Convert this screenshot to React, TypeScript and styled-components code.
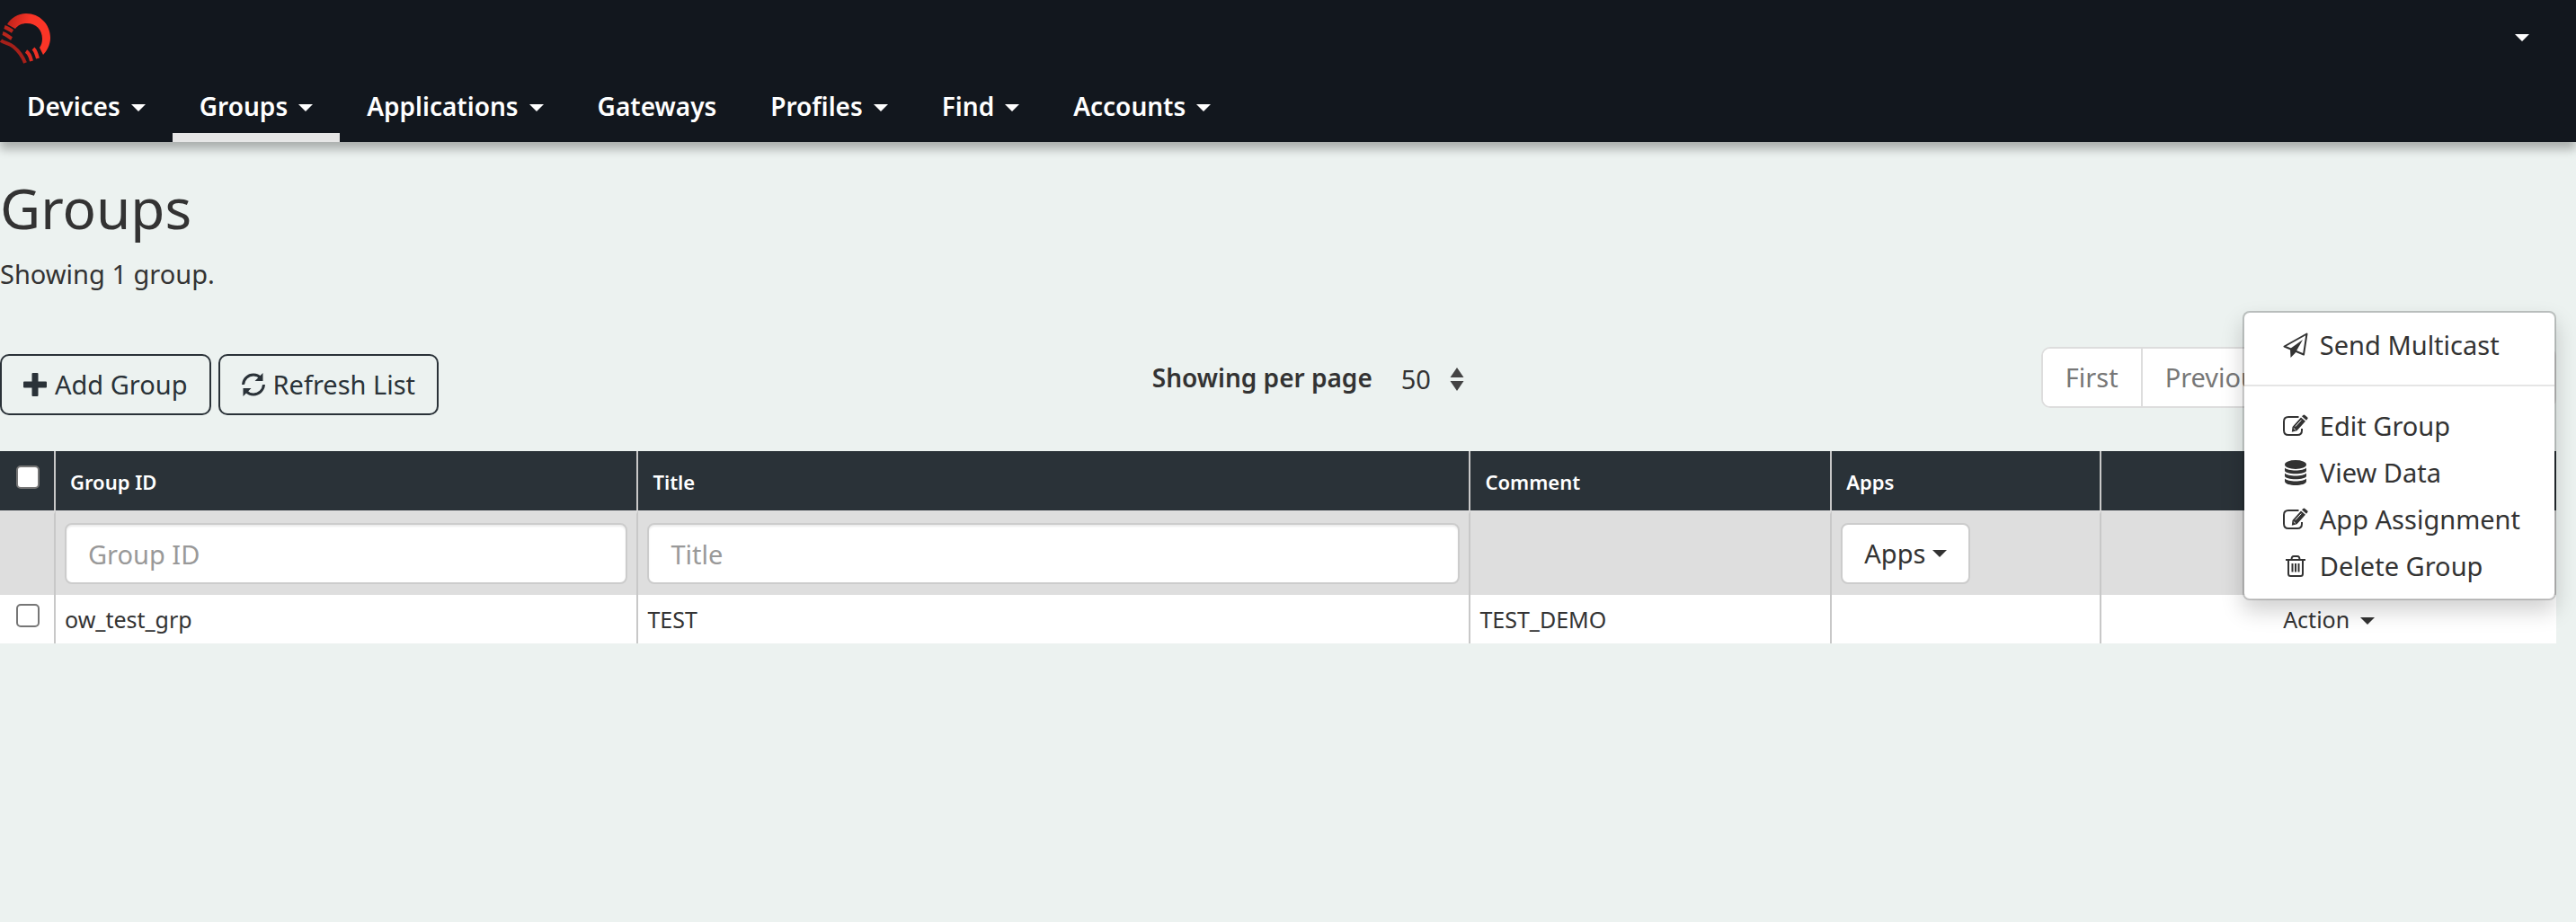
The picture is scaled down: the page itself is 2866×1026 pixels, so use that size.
import React from "react";
import styled, { createGlobalStyle } from "styled-components";

const GlobalStyle = createGlobalStyle`
  *, *::before, *::after { box-sizing: border-box; }
  body {
    margin: 0;
    background: #ecf2f0;
    color: #333;
    font-family: "Noto Sans", "Open Sans", sans-serif;
    font-size: 29px;
    line-height: 42px;
  }
  button, input, select { font: inherit; color: inherit; }
  svg { display: block; flex: none; }
`;

const Header = styled.header`
  background: #12171e;
  color: #fff;
  box-shadow: 0 8px 10px rgba(0, 0, 0, 0.28);
`;

const TopBar = styled.div`
  display: flex;
  justify-content: space-between;
  align-items: flex-start;
  height: 86px;
  padding-right: 52px;
`;

const IconButton = styled.button`
  display: flex;
  align-items: center;
  height: 84px;
  padding: 0;
  border: 0;
  background: none;
  cursor: pointer;
`;

const Caret = styled.span`
  flex: none;
  border: 8px solid transparent;
  border-top-color: currentColor;
  border-bottom-width: 0;
`;

const Nav = styled.nav`
  display: flex;
`;

const NavLink = styled.a<{ $active?: boolean }>`
  display: flex;
  align-items: center;
  gap: 12px;
  height: 72px;
  padding: 2px 30px 0;
  border-bottom: 10px solid ${(p) => (p.$active ? "#e6e6e6" : "transparent")};
  color: #fff;
  font-size: 28px;
  font-weight: 600;
  text-decoration: none;
  ${Caret} { margin-top: 4px; }
`;

const Main = styled.main`
  padding: 40px 22px 40px 0;
`;

const Title = styled.h1`
  margin: 0 0 20px;
  font-size: 62px;
  line-height: 66px;
  font-weight: 400;
`;

const Summary = styled.p`
  margin: 0 0 60px;
`;

const Toolbar = styled.div`
  display: grid;
  grid-template-columns: 45% 1fr auto;
  align-items: start;
  margin-bottom: 40px;
`;

const Actions = styled.div`
  display: flex;
  gap: 8px;
  padding-top: 8px;
`;

const OutlineButton = styled.button`
  display: flex;
  align-items: center;
  gap: 9px;
  height: 68px;
  padding: 0 24px;
  border: 2px solid #2a3238;
  border-radius: 10px;
  background: transparent;
  color: #2a3238;
  cursor: pointer;
`;

const PerPage = styled.div`
  display: flex;
  align-items: center;
  gap: 16px;
  height: 68px;
  padding-left: 2px;
  label {
    font-size: 28px;
    font-weight: 600;
  }
`;

const SelectWrap = styled.span`
  display: grid;
  grid-template-columns: 70px 16px;
  align-items: center;
  padding-top: 4px;
  select {
    grid-area: 1 / 1 / 2 / 3;
    height: 60px;
    padding: 0 16px;
    border: 0;
    background: transparent;
    appearance: none;
  }
  svg { grid-area: 1 / 2; pointer-events: none; }
`;

const Pager = styled.nav`
  display: flex;
  height: 68px;
  border: 2px solid #ddd;
  border-radius: 10px;
  background: #fff;
  overflow: hidden;
`;

const PageLink = styled.a<{ $current?: boolean }>`
  flex: 1 0 auto;
  padding: 0 25px;
  line-height: 64px;
  text-align: center;
  text-decoration: none;
  color: ${(p) => (p.$current ? "#fff" : "#777")};
  background: ${(p) => (p.$current ? "#2a3238" : "#fff")};
  & + & { border-left: 2px solid #ddd; }
`;

const Table = styled.table`
  width: 100%;
  table-layout: fixed;
  border-collapse: separate;
  border-spacing: 0;
  th:not(:last-child), td:not(:last-child) { border-right: 2px solid #c8c8c8; }
`;

const CheckCol = styled.col`
  width: 62px;
`;

const Col = styled.col<{ $share: string }>`
  width: ${(p) => p.$share};
`;

const HeadCell = styled.th`
  height: 66px;
  padding: 2px 16px 0;
  background: #2a3238;
  color: #fff;
  font-size: 22px;
  font-weight: 600;
  text-align: left;
`;

const HeadCheckCell = styled(HeadCell)`
  padding: 16px 0 0 2px;
  vertical-align: top;
`;

const FilterCell = styled.td`
  height: 94px;
  padding: 10px 10px 12px;
  border-top: 4px solid #dedede;
  background: #dedede;
`;

const Cell = styled.td`
  height: 54px;
  padding: 0 10px;
  background: #fff;
  font-size: 25px;
`;

const CheckCell = styled(Cell)`
  padding: 10px 0 0 2px;
  vertical-align: top;
`;

const ActionCell = styled(Cell)`
  position: relative;
  text-align: center;
`;

const Checkbox = styled.input`
  display: block;
  width: 26px;
  height: 26px;
  margin: 0 auto;
  border: 2px solid #767676;
  border-radius: 5px;
  background: #fff;
  appearance: none;
  &:checked { background: #2a3238; }
`;

const TextInput = styled.input`
  display: block;
  width: 100%;
  height: 68px;
  padding: 0 24px;
  border: 2px solid #ccc;
  border-radius: 8px;
  background: #fff;
  box-shadow: inset 0 2px 2px rgba(0, 0, 0, 0.08);
  &::placeholder { color: #999; opacity: 1; }
`;

const FilterButton = styled.button`
  display: flex;
  align-items: center;
  gap: 8px;
  height: 68px;
  padding: 0 24px;
  border: 2px solid #ccc;
  border-radius: 8px;
  background: #fff;
  cursor: pointer;
`;

const ActionButton = styled.button`
  display: inline-flex;
  align-items: center;
  gap: 12px;
  padding: 0;
  border: 0;
  background: none;
  cursor: pointer;
  ${Caret} { margin-top: 4px; }
`;

const Menu = styled.ul`
  position: absolute;
  right: 0;
  bottom: 48px;
  min-width: 348px;
  margin: 0;
  padding: 10px 0;
  border: 2px solid rgba(0, 0, 0, 0.2);
  border-radius: 8px;
  background: #fff;
  background-clip: padding-box;
  box-shadow: 0 12px 24px rgba(0, 0, 0, 0.18);
  list-style: none;
`;

const MenuItem = styled.a`
  display: flex;
  align-items: center;
  gap: 13px;
  padding: 0 38px 0 43px;
  color: #333;
  font-size: 29px;
  line-height: 52px;
  white-space: nowrap;
  text-decoration: none;
`;

const Divider = styled.li`
  height: 2px;
  margin: 18px 0;
  background: #e5e5e5;
`;

const Logo = () => (
  <svg width="56" height="72" viewBox="0 0 56 72" role="img" aria-label="Home">
    <defs>
      <linearGradient id="ring" x1="0" y1="0.1" x2="1" y2="0.4">
        <stop offset="0" stopColor="#b8211a" />
        <stop offset="0.5" stopColor="#fb3527" />
        <stop offset="1" stopColor="#fb3527" />
      </linearGradient>
    </defs>
    <path
      d="M8 27C12 20 20 15 29 15c15 0 27 12 27 27 0 8-4 15-8 19l-4-8c2-3 3-6 3-10 0-10-7-17-17-17-6 0-10 2-13 6Z"
      fill="url(#ring)"
    />
    <path d="M5 30c3 1 6 3 9 5M3 37c4 1 6 4 10 6" stroke="#b8251c" strokeWidth="4" fill="none" />
    <path d="M1 45c4 3 9 3 14 7 6 5 10 10 13 18" stroke="#a5201a" strokeWidth="4" fill="none" />
    <path d="M29 57c3 2 5 6 6 11" stroke="#d92a20" strokeWidth="4" fill="none" />
    <path d="M37 54c3 3 4 7 5 11" stroke="#ee3024" strokeWidth="4" fill="none" />
  </svg>
);

const PlusIcon = () => (
  <svg width="26" height="26" viewBox="0 0 26 26" fill="currentColor">
    <path d="M10.500 0h5q1 0 1 1v8.500h8.500q1 0 1 1v5q0 1-1 1h-8.500v8.500q0 1-1 1h-5q-1 0-1-1v-8.500H1q-1 0-1-1v-5q0-1 1-1h8.500V1q0-1 1-1Z" />
  </svg>
);

const RefreshIcon = () => (
  <svg width="26" height="26" viewBox="0 0 26 26">
    <path d="M1.500 13C2 6.500 7 2 13 2c3.500 0 6 1.300 8 3.500M24.500 13C24 19.500 19 24 13 24c-3.500 0-6-1.300-8-3.500" fill="none" stroke="currentColor" strokeWidth="3" />
    <path d="M23.500 0v9h-9ZM1.500 26v-9h9Z" fill="currentColor" />
  </svg>
);

const SortIcon = () => (
  <svg width="16" height="26" viewBox="0 0 16 26" fill="#444">
    <path d="M8 0l7.500 11H.5ZM8 26l7.500-11H.5Z" />
  </svg>
);

const SendIcon = () => (
  <svg width="28" height="28" viewBox="0 0 28 28">
    <path d="M1.500 15.500 26.500 1.500 23 24.500Z" fill="none" stroke="currentColor" strokeWidth="2" strokeLinejoin="round" />
    <path d="M8 18 22 8 13.500 23 8.500 28Z" fill="currentColor" />
  </svg>
);

const EditIcon = () => (
  <svg width="28" height="28" viewBox="0 0 28 28">
    <path d="M17.500 4H6Q1 4 1 9v10q0 5 5 5h10q5 0 5-5v-2" fill="none" stroke="currentColor" strokeWidth="2" />
    <path d="M20 4.500l5 4.300L15.500 19.300l-5.700 1.500.7-5.800ZM21 3.300l1.400-1.300q1-.8 2 0l2.700 2.300q1 .9.100 2L26 7.700Z" fill="currentColor" />
    <path d="M20.300 7.500 13.800 14.600M11.800 16.500l2 1.800" stroke="#fff" strokeWidth="1" />
  </svg>
);

const DataIcon = () => (
  <svg width="28" height="28" viewBox="0 0 28 28" fill="currentColor">
    <ellipse cx="14" cy="5" rx="12" ry="5" />
    <path d="M2 8.500c3 4 21 4 24 0v3c0 5-24 5-24 0ZM2 14.500c3 4 21 4 24 0v3c0 5-24 5-24 0ZM2 20.500c3 4 21 4 24 0v3c0 6-24 6-24 0Z" />
  </svg>
);

const TrashIcon = () => (
  <svg width="28" height="28" viewBox="0 0 28 28" fill="none" stroke="currentColor" strokeWidth="2">
    <path d="M3 7h22M9.500 7c0-3 1-4 2.500-4h4c1.500 0 2.500 1 2.500 4M6 7v15.500q0 2.500 2.500 2.500h11q2.500 0 2.500-2.500V7M10.500 11v9.500M14 11v9.500M17.500 11v9.500" />
  </svg>
);

const navItems = [
  { label: "Devices", menu: true },
  { label: "Groups", menu: true, active: true },
  { label: "Applications", menu: true },
  { label: "Gateways", menu: false },
  { label: "Profiles", menu: true },
  { label: "Find", menu: true },
  { label: "Accounts", menu: true },
];

const groupActions = [
  { label: "Edit Group", icon: <EditIcon /> },
  { label: "View Data", icon: <DataIcon /> },
  { label: "App Assignment", icon: <EditIcon /> },
  { label: "Delete Group", icon: <TrashIcon /> },
];

export default function App() {
  return (
    <>
      <GlobalStyle />
      <Header>
        <TopBar>
          <Logo />
          <IconButton aria-label="Account menu">
            <Caret />
          </IconButton>
        </TopBar>
        <Nav>
          {navItems.map((item) => (
            <NavLink key={item.label} href="#" $active={item.active}>
              {item.label}
              {item.menu && <Caret />}
            </NavLink>
          ))}
        </Nav>
      </Header>
      <Main>
        <Title>Groups</Title>
        <Summary>Showing 1 group.</Summary>
        <Toolbar>
          <Actions>
            <OutlineButton>
              <PlusIcon />
              Add Group
            </OutlineButton>
            <OutlineButton>
              <RefreshIcon />
              Refresh List
            </OutlineButton>
          </Actions>
          <PerPage>
            <label htmlFor="per-page">Showing per page</label>
            <SelectWrap>
              <select id="per-page" defaultValue="50">
                <option>50</option>
              </select>
              <SortIcon />
            </SelectWrap>
          </PerPage>
          <Pager aria-label="Pages">
            <PageLink href="#">First</PageLink>
            <PageLink href="#">Previous</PageLink>
            <PageLink href="#" $current>1</PageLink>
            <PageLink href="#">Next</PageLink>
            <PageLink href="#">Last</PageLink>
          </Pager>
        </Toolbar>
        <Table>
          <colgroup>
            <CheckCol />
            <Col $share="22.8%" />
            <Col $share="32.56%" />
            <Col $share="14.13%" />
            <Col $share="10.55%" />
            <Col $share="auto" />
          </colgroup>
          <thead>
            <tr>
              <HeadCheckCell>
                <Checkbox type="checkbox" aria-label="Select all groups" />
              </HeadCheckCell>
              <HeadCell>Group ID</HeadCell>
              <HeadCell>Title</HeadCell>
              <HeadCell>Comment</HeadCell>
              <HeadCell>Apps</HeadCell>
              <HeadCell />
            </tr>
          </thead>
          <tbody>
            <tr>
              <FilterCell />
              <FilterCell>
                <TextInput placeholder="Group ID" aria-label="Group ID" />
              </FilterCell>
              <FilterCell>
                <TextInput placeholder="Title" aria-label="Title" />
              </FilterCell>
              <FilterCell />
              <FilterCell>
                <FilterButton>
                  Apps
                  <Caret />
                </FilterButton>
              </FilterCell>
              <FilterCell />
            </tr>
            <tr>
              <CheckCell>
                <Checkbox type="checkbox" aria-label="Select ow_test_grp" />
              </CheckCell>
              <Cell>ow_test_grp</Cell>
              <Cell>TEST</Cell>
              <Cell>TEST_DEMO</Cell>
              <Cell />
              <ActionCell>
                <ActionButton aria-haspopup="menu" aria-expanded="true">
                  Action
                  <Caret />
                </ActionButton>
                <Menu>
                  <li>
                    <MenuItem href="#">
                      <SendIcon />
                      Send Multicast
                    </MenuItem>
                  </li>
                  <Divider />
                  {groupActions.map((action) => (
                    <li key={action.label}>
                      <MenuItem href="#">
                        {action.icon}
                        {action.label}
                      </MenuItem>
                    </li>
                  ))}
                </Menu>
              </ActionCell>
            </tr>
          </tbody>
        </Table>
      </Main>
    </>
  );
}
